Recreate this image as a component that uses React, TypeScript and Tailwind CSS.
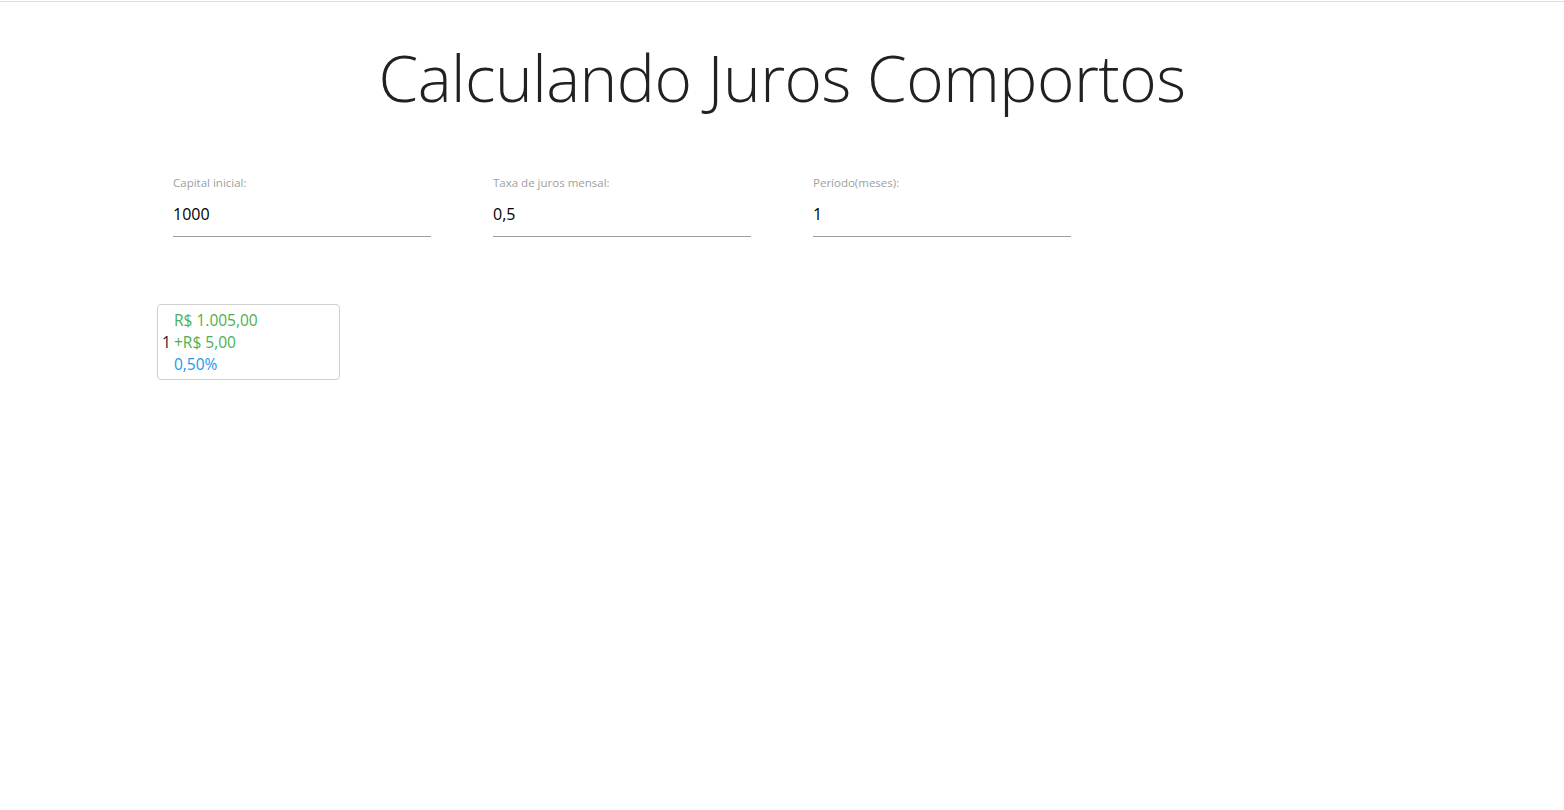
import React from "react"

const fields = [
  { label: "Capital inicial:", value: "1000" },
  { label: "Taxa de juros mensal:", value: "0,5" },
  { label: "Período(meses):", value: "1" },
]

const results = [{ month: 1, total: "R$ 1.005,00", gain: "+R$ 5,00", rate: "0,50%" }]

export default function App() {
  return (
    <div className="min-h-[810px] bg-white font-['Open_Sans',sans-serif] text-[#212121]">
      <div className="pt-px">
        <div className="h-px bg-[#dddddd]" />
      </div>

      <h1 className="mt-[36px] text-center text-[64px] font-light leading-[80px] tracking-[-0.5px]">
        Calculando Juros Comportos
      </h1>

      {/* Form inputs */}
      <div className="mt-[57px] flex pl-[173px]">
        {fields.map((f) => (
          <div key={f.label} className="w-[320px]">
            <div className="w-[258px]">
              <label className="block text-[11.5px] leading-4 text-[#9e9e9e]">{f.label}</label>
              <input
                readOnly
                value={f.value}
                className="mt-[5px] block h-[41px] w-full border-b border-[#9e9e9e] bg-transparent pb-[5px] text-[16px] text-black outline-none"
              />
            </div>
          </div>
        ))}
      </div>

      {/* Results */}
      <div className="mt-[67px] flex pl-[157px]">
        {results.map((r) => (
          <div
            key={r.month}
            className="flex h-[76px] w-[183px] items-center rounded-[4px] border border-[#d0d0d0] pl-[4px] text-[15.5px] leading-[22px]"
          >
            <div className="w-[12px] text-[#212121]">{r.month}</div>
            <div>
              <div className="text-[#4caf50]">{r.total}</div>
              <div className="text-[#4caf50]">{r.gain}</div>
              <div className="text-[#2196f3]">{r.rate}</div>
            </div>
          </div>
        ))}
      </div>
    </div>
  )
}
